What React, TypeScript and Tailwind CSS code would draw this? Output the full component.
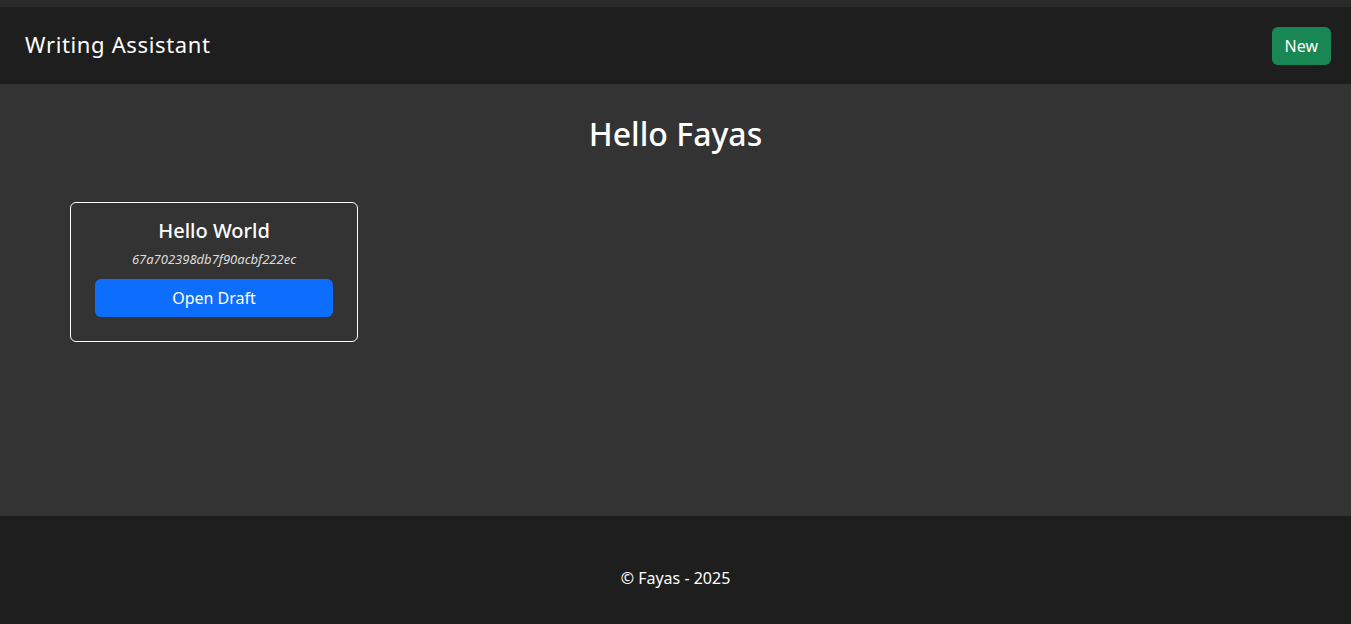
import React from "react";

const drafts = [{ id: "67a702398db7f90acbf222ec", title: "Hello World" }];

export default function App() {
  return (
    <div className="min-h-screen flex flex-col bg-[#333333] text-white font-['Noto_Sans',sans-serif]">
      <div className="h-[7px] bg-[#2b2b2b]" />

      {/* navbar */}
      <nav className="h-[77px] bg-[#1e1e1e] flex items-center justify-between pl-[25px] pr-[20px]">
        <span className="mb-[3px] text-[22px] leading-none tracking-[0.65px]">Writing Assistant</span>
        <button className="h-[38px] px-[13px] rounded-[6px] bg-[#198754] text-[16px]">New</button>
      </nav>

      {/* drafts */}
      <main className="h-[432px] px-[70px] pt-[31px]">
        <h2 className="text-center text-[32px] font-medium leading-[38px]">Hello Fayas</h2>
        <div className="mt-[49px] flex gap-6">
          {drafts.map((d) => (
            <div
              key={d.id}
              className="w-[288px] h-[140px] border border-white rounded-[6px] px-[24px] pt-[14px] flex flex-col items-center"
            >
              <h5 className="text-[20px] font-medium leading-[28px]">{d.title}</h5>
              <p className="mt-[6px] text-[13px] italic text-[#dddddd] leading-[17px]">{d.id}</p>
              <button className="mt-[11px] w-full h-[38px] rounded-[6px] bg-[#0d6efd] text-[16px]">Open Draft</button>
            </div>
          ))}
        </div>
      </main>

      <footer className="flex-1 bg-[#1e1e1e] flex items-center justify-center pt-[16px]">
        <span className="text-[16px]">© Fayas - 2025</span>
      </footer>
    </div>
  );
}
